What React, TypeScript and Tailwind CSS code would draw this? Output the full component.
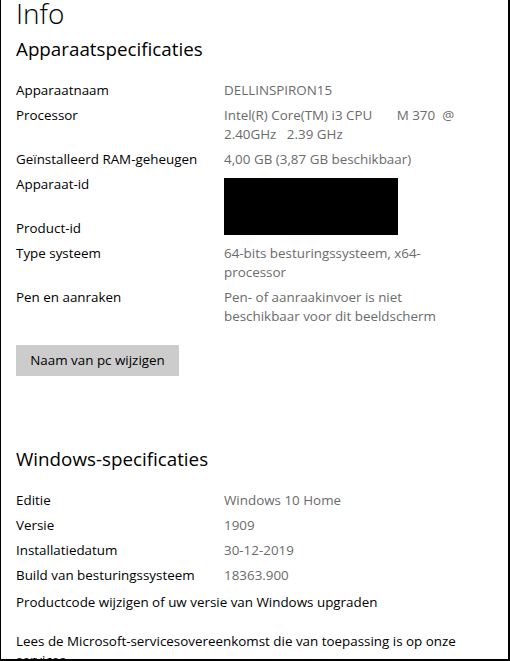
import React from "react";

interface Spec {
  label: string;
  value: React.ReactNode;
}

const deviceSpecs: Spec[] = [
  { label: "Apparaatnaam", value: "DELLINSPIRON15" },
  {
    label: "Processor",
    value: (
      <>
        Intel(R) Core(TM) i3 CPU{"\u00a0\u00a0\u00a0\u00a0\u00a0\u00a0\u00a0"}M 370{"\u00a0\u00a0"}@
        <br />
        2.40GHz{"\u00a0\u00a0\u00a0"}2.39 GHz
      </>
    ),
  },
  { label: "Geïnstalleerd RAM-geheugen", value: "4,00 GB (3,87 GB beschikbaar)" },
];

const windowsSpecs: Spec[] = [
  { label: "Editie", value: "Windows 10 Home" },
  { label: "Versie", value: "1909" },
  { label: "Installatiedatum", value: "30-12-2019" },
  { label: "Build van besturingssysteem", value: "18363.900" },
];

const SpecRow: React.FC<Spec> = ({ label, value }) => (
  <div className="flex">
    <div className="w-[208px] shrink-0 text-black">{label}</div>
    <div className="whitespace-nowrap text-[#6b6b6b]">{value}</div>
  </div>
);

export default function App() {
  return (
    <div
      className="w-[510px] h-[661px] overflow-hidden bg-white border-l border-r-2 border-b-2 border-black text-[13.4px] leading-[19px]"
      style={{ fontFamily: '"Open Sans", "Noto Sans", sans-serif' }}
    >
      <div className="pl-[15px]">
        {/* Page title */}
        <h1 className="text-[28px] leading-[30px] font-light text-black -mt-[2px]">Info</h1>

        {/* Device specs */}
        <h2 className="mt-[8px] text-[18.8px] leading-[26px] text-black">Apparaatspecificaties</h2>
        <div className="mt-[19px] flex flex-col gap-[6px]">
          {deviceSpecs.map((s) => (
            <SpecRow key={s.label} {...s} />
          ))}
          <div className="flex">
            <div className="w-[208px] shrink-0 text-black">Apparaat-id</div>
            <div className="h-[38px]">
              <div className="mt-[3px] w-[174px] h-[57px] bg-black" />
            </div>
          </div>
          <SpecRow label="Product-id" value="" />
          <SpecRow
            label="Type systeem"
            value={
              <>
                64-bits besturingssysteem, x64-
                <br />
                processor
              </>
            }
          />
          <SpecRow
            label="Pen en aanraken"
            value={
              <>
                Pen- of aanraakinvoer is niet
                <br />
                beschikbaar voor dit beeldscherm
              </>
            }
          />
        </div>

        <button className="mt-[19px] w-[163px] h-[31px] bg-[#cccccc] text-black">
          Naam van pc wijzigen
        </button>

        {/* Windows specs */}
        <h2 className="mt-[70px] text-[18.8px] leading-[26px] text-black">Windows-specificaties</h2>
        <div className="mt-[19px] flex flex-col gap-[6px]">
          {windowsSpecs.map((s) => (
            <SpecRow key={s.label} {...s} />
          ))}
        </div>
        <div className="mt-[8px] text-black">
          Productcode wijzigen of uw versie van Windows upgraden
        </div>
        <div className="mt-[20px] w-[480px] text-black">
          Lees de Microsoft-servicesovereenkomst die van toepassing is op onze services
        </div>
      </div>
    </div>
  );
}
